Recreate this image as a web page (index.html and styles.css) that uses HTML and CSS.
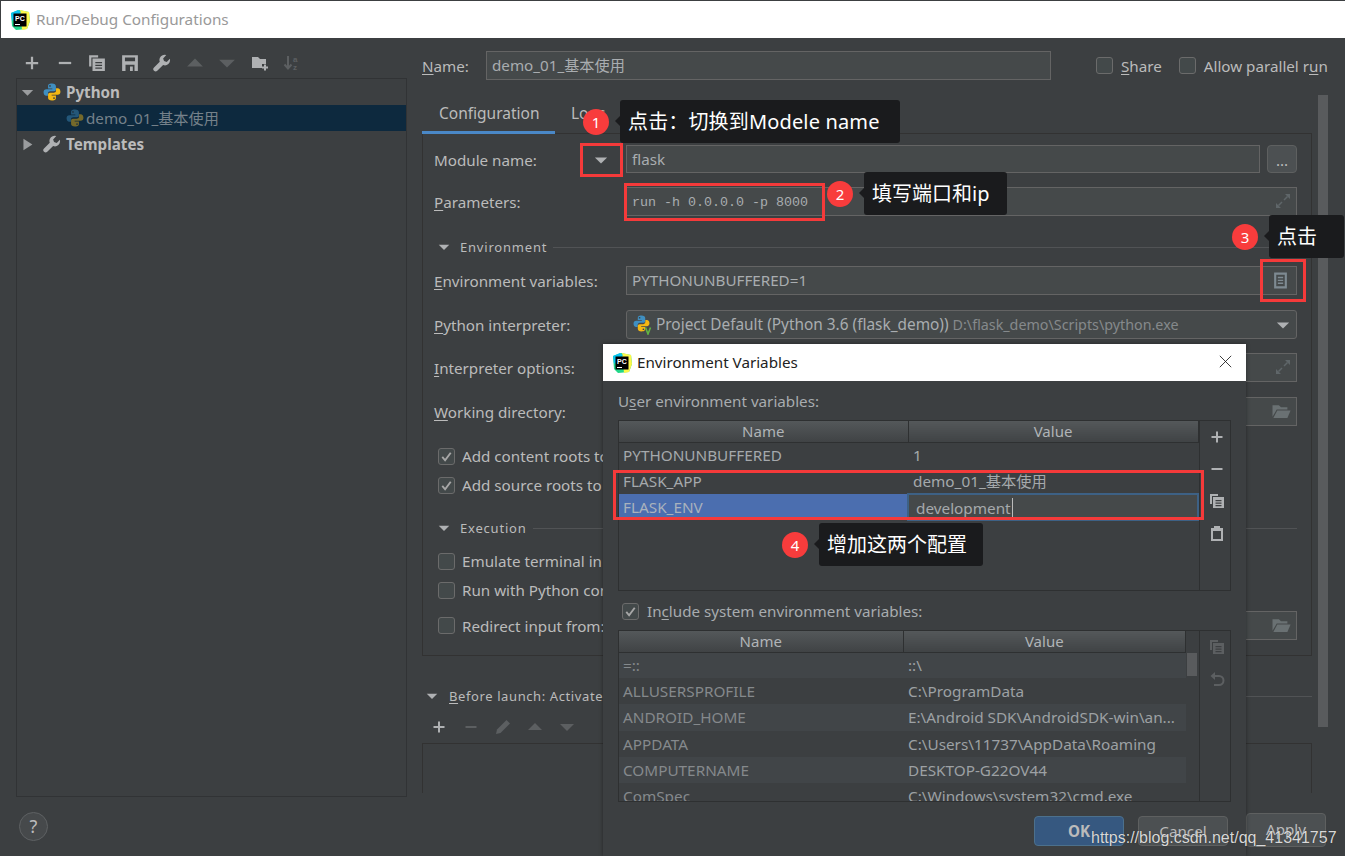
FILE: index.html
```html
<!DOCTYPE html>
<html lang="zh-CN">
  <head>
    <meta charset="utf-8">
    <title>Run/Debug Configurations</title>
    <link rel="stylesheet" href="styles.css">
  </head>

  <body>
    <svg class="sprites" xmlns="http://www.w3.org/2000/svg">
      <symbol id="i-plus" viewBox="0 0 16 16"><path d="M8 2.5v11M2.5 8h11" fill="none" stroke="currentColor" stroke-width="2"/></symbol>
      <symbol id="i-minus" viewBox="0 0 16 16"><path d="M2.5 8h11" fill="none" stroke="currentColor" stroke-width="2"/></symbol>
      <symbol id="i-copy" viewBox="0 0 16 16"><path d="M1 1h8v2H3v8H1z" fill="currentColor"/><path d="M4 4h11v11H4zM6.5 7v1.2h6V7zM6.5 9.5v1.2h6V9.5zM6.5 12v1.2h6V12z" fill="currentColor" fill-rule="evenodd"/></symbol>
      <symbol id="i-save" viewBox="0 0 16 16"><path d="M1 1h14v14H1zM3.5 3v3.5h9V3zM4 9.5V15h8V9.5zM8 11h2.5v4H8z" fill="currentColor" fill-rule="evenodd"/></symbol>
      <symbol id="i-wrench" viewBox="0 0 16 16"><path d="M15 4.3l-2.8 2.8-2.4-.8-.8-2.4L11.800.9A4.600 4.600 0 0 0 6 6.800L.9 12a2 2 0 0 0 2.900 2.900L9 9.800a4.600 4.600 0 0 0 6-5.500z" fill="currentColor"/></symbol>
      <symbol id="i-up" viewBox="0 0 16 16"><path d="M8 4l7 7H1z" fill="currentColor"/></symbol>
      <symbol id="i-down" viewBox="0 0 16 16"><path d="M8 12L1 5h14z" fill="currentColor"/></symbol>
      <symbol id="i-right" viewBox="0 0 16 16"><path d="M3 1l11 7-11 7z" fill="currentColor"/></symbol>
      <symbol id="i-folder-add" viewBox="0 0 18 18"><path d="M1 3h6l2 2h6v5h-4v4H1z" fill="currentColor"/><path d="M14 10.500v6M11 13.500h6" fill="none" stroke="currentColor" stroke-width="2"/></symbol>
      <symbol id="i-sort" viewBox="0 0 18 18"><path d="M5 2v12M1.500 10.500L5 14.500l3.500-4" fill="none" stroke="currentColor" stroke-width="2"/><text x="10" y="8" font-size="8" font-weight="700" font-family="Liberation Sans, sans-serif" fill="currentColor">a</text><text x="10" y="16" font-size="8" font-weight="700" font-family="Liberation Sans, sans-serif" fill="currentColor">z</text></symbol>
      <symbol id="i-expand" viewBox="0 0 16 16"><path d="M10 1h5v5zM1 10v5h5z" fill="currentColor"/><path d="M12.500 3.500L9 7M3.500 12.500L7 9" fill="none" stroke="currentColor" stroke-width="1.500"/></symbol>
      <symbol id="i-doc" viewBox="0 0 16 16"><path d="M2 .5h12v15H2zM4 2.500v11h8v-11zM5.500 4.500h5v1.300h-5zM5.500 7.200h5v1.300h-5zM5.500 9.900h5v1.300h-5z" fill="currentColor" fill-rule="evenodd"/></symbol>
      <symbol id="i-folder" viewBox="0 0 18 16"><path d="M1 2h6l2 2h6v2H5L1 13z" fill="currentColor"/><path d="M5.500 7H18l-3 7H1.800z" fill="currentColor"/></symbol>
      <symbol id="i-clip" viewBox="0 0 16 16"><path d="M2 3h3V1h6v2h3v13H2zM4 6v8h8V6z" fill="currentColor" fill-rule="evenodd"/></symbol>
      <symbol id="i-undo" viewBox="0 0 16 16"><path d="M6 1L1.500 5 6 9V6h4a3 3 0 0 1 0 7H5v2h5a5 5 0 0 0 0-11H6z" fill="currentColor"/></symbol>
      <symbol id="i-pencil" viewBox="0 0 16 16"><path d="M11.500 1l3.500 3.500-9.500 9.500L1 15l1-4.500z" fill="currentColor"/></symbol>
      <symbol id="i-check" viewBox="0 0 16 16"><path d="M3.500 8.500l3 3.500 6-8" fill="none" stroke="currentColor" stroke-width="2"/></symbol>
      <symbol id="i-close" viewBox="0 0 16 16"><path d="M1 1l14 14M15 1L1 15" fill="none" stroke="currentColor" stroke-width="1"/></symbol>
      <symbol id="i-python" viewBox="0 0 16 16">
        <path d="M8 .5C5 .5 4.500 1.700 4.500 3V4.800H8.300V5.500H3C1.400 5.500.5 6.600.5 8.200S1.400 11.300 3 11.300H4.400V9.400C4.400 8.200 5.400 7.400 6.500 7.400H9.800C10.900 7.400 11.500 6.600 11.500 5.600V3C11.500 1.500 10.300.5 8 .5Z" fill="#3f8fc1"/>
        <path d="M8 15.500C11 15.500 11.500 14.300 11.500 13V11.200H7.700V10.500H13C14.600 10.500 15.500 9.400 15.500 7.800S14.600 4.700 13 4.700H11.600V6.600C11.600 7.800 10.600 8.600 9.500 8.600H6.200C5.100 8.600 4.500 9.400 4.500 10.400V13C4.500 14.500 5.700 15.500 8 15.500Z" fill="#f4b813"/>
        <circle cx="6.200" cy="2.600" r=".8" fill="#3c3f41"/>
        <circle cx="9.800" cy="13.400" r=".8" fill="#3c3f41"/>
      </symbol>
      <symbol id="i-python-venv" viewBox="0 0 20 20">
        <use href="#i-python" width="17" height="17"/>
        <path d="M12.500 12.500l2.500 6.500 2.500-6.500" fill="none" stroke="#62b543" stroke-width="1.600"/>
      </symbol>
      <symbol id="i-pc" viewBox="0 0 20 20">
        <path d="M1 3l8-3 10 2 1 9-3 8-11 1-4-4z" fill="#21d789"/>
        <path d="M10 0l9 2 1 9-3 8-5 1z" fill="#fcf84a"/>
        <path d="M1 3l7-3 3 2-9 9z" fill="#07c3f2"/>
        <rect x="3.500" y="3.500" width="13" height="13" fill="#000"/>
        <rect x="5" y="14" width="5" height="1" fill="#fff"/>
        <text x="5" y="10.500" font-size="7" font-weight="700" font-family="Liberation Sans, sans-serif" fill="#fff">PC</text>
      </symbol>
    </svg>

    <div class="titlebar">
      <svg class="logo"><use href="#i-pc"/></svg>
      <span class="title-text">Run/Debug Configurations</span>
    </div>

    <div class="window">
      <aside class="side">
        <div class="tools">
          <svg class="ic"><use href="#i-plus"/></svg>
          <svg class="ic"><use href="#i-minus"/></svg>
          <svg class="ic"><use href="#i-copy"/></svg>
          <svg class="ic"><use href="#i-save"/></svg>
          <svg class="ic"><use href="#i-wrench"/></svg>
          <svg class="ic off"><use href="#i-up"/></svg>
          <svg class="ic off"><use href="#i-down"/></svg>
          <svg class="ic"><use href="#i-folder-add"/></svg>
          <svg class="ic off"><use href="#i-sort"/></svg>
        </div>
        <ul class="tree">
          <li class="tree-top">
            <svg class="arrow"><use href="#i-down"/></svg>
            <svg class="ic-py"><use href="#i-python"/></svg>
            <b>Python</b>
          </li>
          <li class="tree-sel">
            <svg class="ic-py dim"><use href="#i-python"/></svg>
            <span>demo_01_基本使用</span>
          </li>
          <li class="tree-top">
            <svg class="arrow"><use href="#i-right"/></svg>
            <svg class="ic-py wrench"><use href="#i-wrench"/></svg>
            <b>Templates</b>
          </li>
        </ul>
        <div class="help">?</div>
      </aside>

      <main class="main">
        <div class="name-row">
          <label class="name-label"><u>N</u>ame:</label>
          <div class="field name-field">demo_01_基本使用</div>
          <span class="box share-box"></span>
          <span><u>S</u>hare</span>
          <span class="box parallel-box"></span>
          <span>Allow parallel r<u>u</u>n</span>
        </div>

        <div class="scroll-area">
          <div class="content">
            <div class="tabs">
              <span class="tab active">Configuration</span>
              <span class="tab">Logs</span>
            </div>

            <section class="panel">
              <div class="row first">
                <label class="module-label">Module name: <svg class="caret"><use href="#i-down"/></svg></label>
                <div class="split">
                  <div class="field grow">flask</div>
                  <div class="more">...</div>
                </div>
              </div>
              <div class="row">
                <label><u>P</u>arameters:</label>
                <div class="field mono">run -h 0.0.0.0 -p 8000<svg class="end"><use href="#i-expand"/></svg></div>
              </div>
              <div class="heading"><svg class="arrow-sm"><use href="#i-down"/></svg><span>Environment</span><i></i></div>
              <div class="row after-heading">
                <label><u>E</u>nvironment variables:</label>
                <div class="field">PYTHONUNBUFFERED=1<svg class="end doc"><use href="#i-doc"/></svg></div>
              </div>
              <div class="row wide">
                <label><u>P</u>ython interpreter:</label>
                <div class="field combo">
                  <svg class="ic-py venv"><use href="#i-python-venv"/></svg>
                  <span>Project Default (Python 3.6 (flask_demo))</span>
                  <small>D:\flask_demo\Scripts\python.exe</small>
                  <svg class="end caret"><use href="#i-down"/></svg>
                </div>
              </div>
              <div class="row">
                <label><u>I</u>nterpreter options:</label>
                <div class="field"><svg class="end"><use href="#i-expand"/></svg></div>
              </div>
              <div class="row wide">
                <label><u>W</u>orking directory:</label>
                <div class="field"><svg class="end folder"><use href="#i-folder"/></svg></div>
              </div>
              <div class="check check-first"><span class="box on"><svg><use href="#i-check"/></svg></span>Add content roots to PYTHONPATH</div>
              <div class="check"><span class="box on"><svg><use href="#i-check"/></svg></span>Add source roots to PYTHONPATH</div>
              <div class="heading exec"><svg class="arrow-sm"><use href="#i-down"/></svg><span>Execution</span><i></i></div>
              <div class="check check-exec"><span class="box"></span>Emulate terminal in output console</div>
              <div class="check"><span class="box"></span>Run with Python console</div>
              <div class="row redirect">
                <div class="check"><span class="box"></span>Redirect input from:</div>
                <div class="field"><svg class="end folder"><use href="#i-folder"/></svg></div>
              </div>
            </section>

            <div class="before"><svg class="arrow-sm"><use href="#i-down"/></svg><span><u>B</u>efore launch: Activate tool window</span><i></i></div>
            <div class="tools before-tools">
              <svg class="ic"><use href="#i-plus"/></svg>
              <svg class="ic off"><use href="#i-minus"/></svg>
              <svg class="ic off"><use href="#i-pencil"/></svg>
              <svg class="ic off"><use href="#i-up"/></svg>
              <svg class="ic off"><use href="#i-down"/></svg>
            </div>
            <div class="before-list"></div>
          </div>
          <div class="scrollbar"></div>
        </div>

        <div class="actions">
          <span class="btn">Apply</span>
        </div>
      </main>
    </div>

    <!-- Environment Variables dialog -->
    <div class="dialog">
      <div class="titlebar dialog-title">
        <svg class="logo"><use href="#i-pc"/></svg>
        <span>Environment Variables</span>
        <svg class="close"><use href="#i-close"/></svg>
      </div>
      <div class="dialog-body">
        <p class="dialog-label">U<u>s</u>er environment variables:</p>
        <div class="env-box user-box">
          <table class="env-table">
            <thead><tr><th class="user-col">Name</th><th>Value</th></tr></thead>
            <tbody>
              <tr><td>PYTHONUNBUFFERED</td><td>1</td></tr>
              <tr><td>FLASK_APP</td><td>demo_01_基本使用</td></tr>
              <tr class="sel"><td>FLASK_ENV</td><td class="editing"><span>development</span></td></tr>
            </tbody>
          </table>
          <div class="side-tools">
            <svg class="ic"><use href="#i-plus"/></svg>
            <svg class="ic"><use href="#i-minus"/></svg>
            <svg class="ic"><use href="#i-copy"/></svg>
            <svg class="ic"><use href="#i-clip"/></svg>
          </div>
        </div>

        <div class="include"><span class="box on"><svg><use href="#i-check"/></svg></span><span>In<u>c</u>lude system environment variables:</span></div>

        <div class="env-box system-box">
          <table class="env-table system">
            <thead><tr><th class="system-col">Name</th><th>Value</th></tr></thead>
            <tbody>
              <tr><td>=::</td><td>::\</td></tr>
              <tr><td>ALLUSERSPROFILE</td><td>C:\ProgramData</td></tr>
              <tr><td>ANDROID_HOME</td><td>E:\Android SDK\AndroidSDK-win\an...</td></tr>
              <tr><td>APPDATA</td><td>C:\Users\11737\AppData\Roaming</td></tr>
              <tr><td>COMPUTERNAME</td><td>DESKTOP-G22OV44</td></tr>
              <tr><td>ComSpec</td><td>C:\Windows\system32\cmd.exe</td></tr>
            </tbody>
          </table>
          <div class="table-scroll"><i></i></div>
          <div class="side-tools">
            <svg class="ic off"><use href="#i-copy"/></svg>
            <svg class="ic off"><use href="#i-undo"/></svg>
          </div>
        </div>

        <div class="dialog-actions">
          <span class="btn primary">OK</span>
          <span class="btn">Cancel</span>
        </div>
      </div>
    </div>

    <!-- screenshot annotations -->
    <div class="mark mark-1"></div>
    <div class="mark mark-2"></div>
    <div class="mark mark-3"></div>
    <div class="mark mark-4"></div>

    <div class="note note-1"><b>1</b><span>点击：切换到Modele name</span></div>
    <div class="note note-2"><b>2</b><span>填写端口和ip</span></div>
    <div class="note note-3"><b>3</b><span>点击</span></div>
    <div class="note note-4"><b>4</b><span>增加这两个配置</span></div>

    <div class="watermark">https://blog.csdn.net/qq_41341757</div>
  </body>
</html>
```

FILE: styles.css
```css
* {
  box-sizing: border-box;
}

html,
body {
  margin: 0;
  height: 856px;
  overflow: hidden;
}

body {
  position: relative;
  padding-top: 1px;
  background-color: #3c3f41;
  color: #bbb;
  font-family: "Noto Sans", "Noto Sans CJK SC", sans-serif;
  font-size: 15.200px;
  line-height: 20px;
}

u {
  text-underline-offset: 2px;
}

svg {
  display: block;
}

.sprites {
  display: none;
}

.titlebar {
  display: flex;
  align-items: center;
  gap: 6px;
  height: 37px;
  margin-left: 1px;
  padding-left: 9px;
  background-color: #fff;
  color: #999;
}

.logo {
  width: 20px;
  height: 20px;
  flex: none;
}

.title-text {
  margin-bottom: 2px;
  font-size: 15.300px;
}

.window {
  display: flex;
  height: 818px;
}

/* left column */
.side {
  flex: none;
  width: 422px;
  padding-left: 16px;
}

.tools {
  display: flex;
  align-items: center;
  gap: 16px;
  height: 40px;
  color: #afb1b3;
}

.side .tools {
  gap: 14.500px;
  padding: 10px 0 0 7px;
}

.ic {
  flex: none;
  width: 16px;
  height: 16px;
}

.side .ic {
  width: 18px;
  height: 18px;
}

.ic.off {
  color: #5c5f61;
}

.tree {
  width: 391px;
  height: 719px;
  margin: 0;
  padding: 0;
  border: 1px solid #313335;
  list-style: none;
}

.tree li {
  display: flex;
  align-items: center;
  height: 26px;
}

.tree-top {
  padding-left: 4px;
}

.tree-top b {
  margin-left: 5px;
}

.arrow {
  width: 13px;
  height: 13px;
  margin-right: 9px;
  color: #9a9c9e;
}

.ic-py {
  flex: none;
  width: 18px;
  height: 18px;
}

.ic-py.wrench {
  color: #afb1b3;
}

.ic-py.venv {
  width: 20px;
  height: 20px;
}

.tree-sel {
  padding-left: 49px;
  background-color: #0d293e;
  color: #75818a;
}

.tree-sel span {
  margin-left: 2px;
}

.ic-py.dim {
  opacity: 0.45;
}

.help {
  width: 29px;
  height: 29px;
  margin: 15px 0 0 3px;
  border: 1px solid #5e6163;
  border-radius: 50%;
  background-color: #46494b;
  color: #bbb;
  font-size: 18px;
  line-height: 26px;
  text-align: center;
}

/* right column */
.main {
  flex: none;
  width: 908px;
}

.name-row {
  display: flex;
  align-items: center;
  height: 29px;
  margin-top: 13px;
}

.name-label {
  width: 64px;
}

.field {
  position: relative;
  height: 29px;
  border: 1px solid #646464;
  background-color: #45494a;
  padding-left: 5px;
  line-height: 27px;
  color: #a9adb0;
}

.name-field {
  width: 565px;
  margin-right: 45px;
}

.box {
  flex: none;
  display: block;
  width: 17px;
  height: 17px;
  border: 1px solid #6b6b6b;
  border-radius: 3px;
  background-color: #43494a;
  color: #a7a7a7;
}

.box svg {
  width: 15px;
  height: 15px;
}

.share-box {
  margin-right: 8px;
}

.parallel-box {
  margin: 0 8px 0 17px;
}

.scroll-area {
  display: flex;
  gap: 6px;
  margin-top: 15px;
}

.content {
  flex: none;
  width: 890px;
}

.scrollbar {
  flex: none;
  width: 10px;
  height: 632px;
  background-color: #595b5d;
}

.tabs {
  display: flex;
  height: 39px;
  font-size: 15.500px;
}

.tab {
  width: 149px;
  padding-top: 8px;
  padding-left: 17px;
}

.tab.active {
  width: 133px;
  margin-right: 16px;
  padding-left: 17px;
  border-bottom: 3px solid #4a88c7;
}

.tab:last-child {
  padding-left: 0;
}

.panel {
  height: 523px;
  margin-top: -1px;
  padding: 0 14px 0 11px;
  border: 1px solid #323232;
}

.row {
  display: grid;
  grid-template-columns: 192px 1fr;
  align-items: center;
  margin-top: 14px;
}

.row label {
  padding-top: 1px;
}

.row.first {
  margin-top: 11px;
}

.row.wide {
  margin-top: 15px;
}

.row.after-heading {
  margin-top: 11px;
}

.module-label {
  display: flex;
  justify-content: space-between;
  align-items: center;
  padding-right: 18px;
}

.caret {
  width: 14px;
  height: 14px;
  color: #afb1b3;
}

.split {
  display: flex;
  gap: 7px;
}

.split .field {
  height: 28px;
}

.grow {
  flex: 1;
}

.more {
  width: 30px;
  height: 28px;
  border: 1px solid #5e6060;
  border-radius: 4px;
  background-color: #4c5052;
  text-align: center;
  line-height: 28px;
}

.mono {
  padding-left: 5px;
  font-family: "Liberation Mono", "Noto Sans CJK SC", monospace;
  font-size: 13.330px;
  line-height: 30px;
}

.end {
  position: absolute;
  top: 5px;
  right: 5px;
  width: 16px;
  height: 16px;
  color: #5f6669;
}

.end.doc {
  top: 5px;
  right: 7px;
  width: 17px;
  height: 17px;
  color: #7e8a92;
}

.end.folder {
  width: 20px;
  height: 17px;
  color: #6a7173;
}

.end.caret {
  color: #afb1b3;
  top: 7px;
  right: 6px;
  width: 14px;
  height: 14px;
}

.combo {
  display: flex;
  align-items: center;
  gap: 4px;
  border-radius: 3px;
  padding-left: 6px;
}

.combo span {
  margin-left: -1px;
  font-size: 15.400px;
}

.combo small {
  font-size: 14.300px;
  color: #85898c;
}

.heading {
  display: flex;
  align-items: center;
  height: 16px;
  margin-top: 23px;
  padding-left: 4px;
  font-size: 13px;
  letter-spacing: 0.8px;
}

.heading span {
  margin: 0 6px 0 10px;
}

.heading i,
.before i {
  flex: 1;
  height: 1px;
  background-color: #515355;
}

.heading.exec {
  margin-top: 25px;
}

.arrow-sm {
  flex: none;
  width: 12px;
  height: 12px;
  color: #afb1b3;
}

.check {
  display: flex;
  align-items: center;
  gap: 7px;
  height: 20px;
  padding-left: 4px;
  margin-top: 9px;
  white-space: nowrap;
}

.check-first {
  margin-top: 20px;
}

.check-exec {
  margin-top: 15px;
}

.row.redirect {
  margin-top: 11px;
}

.row.redirect .check {
  margin-top: 0;
}

.before {
  display: flex;
  align-items: center;
  height: 16px;
  margin-top: 32px;
  padding-left: 4px;
  font-size: 13px;
  letter-spacing: 0.6px;
}

.before span {
  margin: 0 7px 0 11px;
}

.before-tools {
  height: 30px;
  margin-top: 8px;
  padding-left: 9px;
}

.before-list {
  height: 50px;
  margin-top: 1px;
  border: 1px solid #323232;
  border-bottom: 0;
}

.actions {
  display: flex;
  justify-content: flex-end;
  margin-top: 20px;
  padding-right: 4px;
}

.btn {
  display: block;
  width: 90px;
  height: 30px;
  border: 1px solid #5e6060;
  border-radius: 4px;
  background-color: #4c5052;
  text-align: center;
  line-height: 28px;
}

.actions .btn {
  width: 80px;
  height: 34px;
  line-height: 30px;
}

.btn.primary {
  border-color: #4c708c;
  background-color: #365880;
  font-weight: 700;
}

/* dialog */
.dialog {
  position: absolute;
  left: 603px;
  top: 344px;
  width: 643px;
  height: 512px;
  background-color: #3c3f41;
  box-shadow: 0 0 4px rgba(0, 0, 0, 0.4);
}

.dialog-title {
  margin-left: 0;
  padding-left: 9px;
  gap: 5px;
  color: #222;
}

.dialog-title span {
  margin-bottom: 2px;
}

.close {
  width: 13px;
  height: 13px;
  margin: 0 14px 2px auto;
  color: #111;
}

.dialog-body {
  padding: 0 15px;
}

.dialog-label {
  margin: 10px 0 9px;
  color: #a8acaf;
}

.env-box {
  display: flex;
  width: 613px;
  border: 1px solid #2e3031;
  overflow: hidden;
}

.user-box {
  height: 171px;
}

.system-box {
  height: 172px;
}

.env-table {
  flex: none;
  width: 580px;
  height: 0;
  border-collapse: collapse;
  table-layout: fixed;
}

.env-table.system {
  width: 567px;
}

.env-table th {
  height: 21px;
  padding: 0;
  border-bottom: 1px solid #2e3031;
  border-right: 1px solid #2e3031;
  background: linear-gradient(#54585a, #404345);
  font-weight: 400;
  font-size: 15px;
  color: #b0b4b7;
}

.user-col {
  width: 289px;
}

.system-col {
  width: 284px;
}

.env-table td {
  height: 26px;
  padding: 0 0 0 4px;
  white-space: nowrap;
  overflow: hidden;
  font-size: 15.300px;
  color: #a5a9ac;
}

.env-table td + td {
  padding-left: 5px;
}

.env-table.system td {
  height: 26.200px;
  color: #9da1a4;
}

.env-table.system td:first-child {
  color: #85898c;
}

.env-table.system tbody tr:nth-child(odd) {
  background-color: #414548;
}

.sel td:first-child {
  background-color: #4b6eaf;
  color: #a9b2bd;
}

.env-table td.editing {
  padding: 1px 0 0 2px;
  border: 2px solid #3d6185;
  background-color: #45494a;
}

.editing span {
  padding: 0 1px 0 5px;
  border-right: 1px solid #bbb;
}

.side-tools {
  display: flex;
  flex-direction: column;
  gap: 16px;
  flex: 1;
  padding: 8px 0 0 9px;
  border-left: 1px solid #2e3031;
  color: #afb1b3;
}

.table-scroll {
  flex: none;
  width: 13px;
  padding: 22px 2px 0 1px;
}

.table-scroll i {
  display: block;
  height: 23px;
  background-color: #595b5d;
}

.include {
  display: flex;
  align-items: center;
  gap: 8px;
  height: 20px;
  margin: 10px 0 9px 4px;
  color: #a8acaf;
}

.dialog-actions {
  display: flex;
  justify-content: flex-end;
  gap: 14px;
  margin-top: 14px;
  padding-right: 3px;
}

/* annotations */
.mark {
  position: absolute;
  border: 3px solid #f53a3a;
}

.mark-1 {
  left: 580px;
  top: 143px;
  width: 43px;
  height: 34px;
}

.mark-2 {
  left: 624px;
  top: 183px;
  width: 201px;
  height: 38px;
}

.mark-3 {
  left: 1260px;
  top: 259px;
  width: 46px;
  height: 43px;
}

.mark-4 {
  left: 613px;
  top: 470px;
  width: 591px;
  height: 50px;
}

.note {
  position: absolute;
  display: flex;
  align-items: center;
  height: 43px;
  color: #fff;
  font-family: "Noto Sans", "Noto Sans CJK SC", sans-serif;
  font-size: 20px;
}

.note b {
  width: 26px;
  height: 26px;
  margin-right: 11px;
  border-radius: 50%;
  background-color: #f83c3c;
  font-size: 15px;
  font-weight: 400;
  line-height: 26px;
  text-align: center;
}

.note span {
  position: relative;
  height: 43px;
  padding: 0 18px 0 8px;
  border-radius: 3px;
  background-color: #1a1b1d;
  line-height: 43px;
  white-space: nowrap;
}

.note span::before {
  content: "";
  position: absolute;
  left: -5px;
  top: 16px;
  border-top: 5px solid transparent;
  border-bottom: 5px solid transparent;
  border-right: 5px solid #1a1b1d;
}

.note-1 {
  left: 583px;
  top: 100px;
}

.note-1 span {
  padding-right: 20px;
  letter-spacing: 0.15px;
}

.note-2 {
  left: 827px;
  top: 172px;
}

.note-3 {
  left: 1232px;
  top: 215px;
}

.note-3 span {
  padding-right: 27px;
}

.note-4 {
  left: 782px;
  top: 523px;
}

.note-4 span {
  padding-right: 16px;
}

.watermark {
  position: absolute;
  left: 1091px;
  top: 828px;
  color: #d8d8d8;
  font-family: "Liberation Sans", Arial, sans-serif;
  font-size: 16px;
  text-shadow: 0 0 1px rgba(0, 0, 0, 0.5);
  white-space: nowrap;
}
```
